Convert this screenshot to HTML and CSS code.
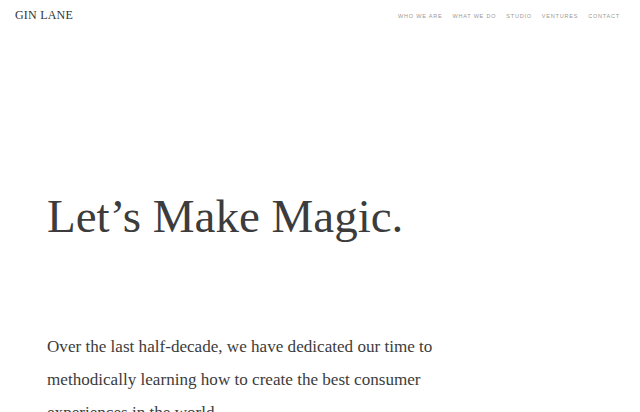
FILE: index.html
```html
<!DOCTYPE html>
<html>
<head>
<meta charset="utf-8">
<link rel="stylesheet" href="styles.css">
</head>
<body>
<header class="header">
  <div class="logo">GIN LANE</div>
  <nav class="nav">
    <a>WHO WE ARE</a>
    <a>WHAT WE DO</a>
    <a>STUDIO</a>
    <a>VENTURES</a>
    <a>CONTACT</a>
  </nav>
</header>
<main class="main">
  <h1 class="title">Let’s Make Magic.</h1>
  <p class="intro">Over the last half-decade, we have dedicated our time to methodically learning how to create the best consumer experiences in the world.</p>
</main>
</body>
</html>
```
FILE: styles.css
```css
html, body { margin: 0; padding: 0; background: #fff; }
body { width: 640px; height: 412px; overflow: hidden; font-family: "Liberation Serif", "Times New Roman", serif; color: #3a3a3a; }
.header { display: flex; justify-content: space-between; align-items: center; padding: 8px 20px 0 15px; height: 15px; }
.logo { font-size: 12px; letter-spacing: 0.2px; color: #333; }
.nav { display: flex; gap: 10px; font-family: "Liberation Sans", Arial, sans-serif; font-size: 5.5px; letter-spacing: 0.8px; color: #9a9a9a; }
.main { padding: 0 47px; }
.title { margin: 158px 0 0; font-weight: normal; font-size: 47px; line-height: 70px; color: #3c3c3c; }
.intro { margin: 79px 0 0; font-size: 17.1px; line-height: 33px; width: 420px; color: #3c3c3c; }
```
